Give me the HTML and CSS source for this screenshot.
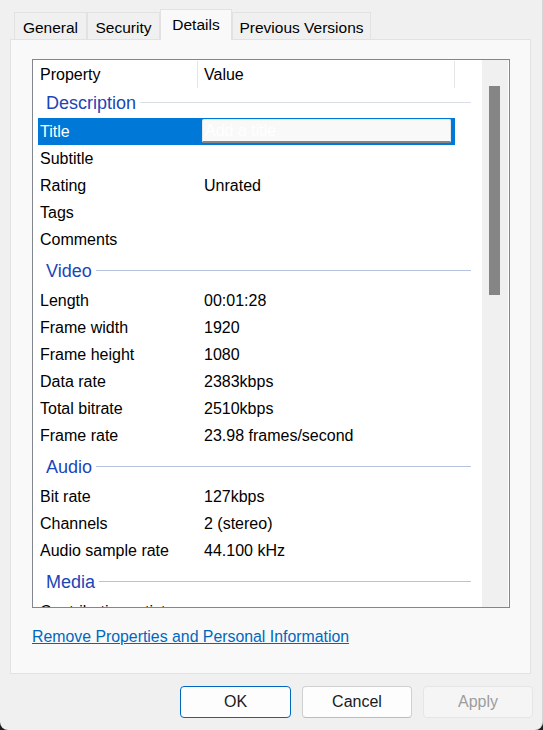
FILE: index.html
```html
<!DOCTYPE html>
<html>
<head>
<meta charset="utf-8">
<link rel="stylesheet" href="styles.css">
</head>
<body>
<div class="window">
  <div class="tabs">
    <div class="tab t-general">General</div>
    <div class="tab t-security">Security</div>
    <div class="tab t-details active">Details</div>
    <div class="tab t-prev">Previous Versions</div>
  </div>
  <div class="panel">
    <div class="list">
      <div class="content">
        <div class="hdr">
          <div class="hcell h1">Property</div>
          <div class="hcell h2">Value</div>
        </div>
        <div class="group first"><span class="gname">Description</span><span class="gline light"></span></div>
        <div class="row selected"><div class="lbl">Title</div><div class="val"><div class="edit">Add a title</div></div></div>
        <div class="row"><div class="lbl">Subtitle</div><div class="val"></div></div>
        <div class="row"><div class="lbl">Rating</div><div class="val">Unrated</div></div>
        <div class="row"><div class="lbl">Tags</div><div class="val"></div></div>
        <div class="row"><div class="lbl">Comments</div><div class="val"></div></div>
        <div class="group"><span class="gname">Video</span><span class="gline"></span></div>
        <div class="row"><div class="lbl">Length</div><div class="val">00:01:28</div></div>
        <div class="row"><div class="lbl">Frame width</div><div class="val">1920</div></div>
        <div class="row"><div class="lbl">Frame height</div><div class="val">1080</div></div>
        <div class="row"><div class="lbl">Data rate</div><div class="val">2383kbps</div></div>
        <div class="row"><div class="lbl">Total bitrate</div><div class="val">2510kbps</div></div>
        <div class="row"><div class="lbl">Frame rate</div><div class="val">23.98 frames/second</div></div>
        <div class="group"><span class="gname">Audio</span><span class="gline"></span></div>
        <div class="row"><div class="lbl">Bit rate</div><div class="val">127kbps</div></div>
        <div class="row"><div class="lbl">Channels</div><div class="val">2 (stereo)</div></div>
        <div class="row"><div class="lbl">Audio sample rate</div><div class="val">44.100 kHz</div></div>
        <div class="group"><span class="gname">Media</span><span class="gline"></span></div>
        <div class="row"><div class="lbl">Contributing artists</div><div class="val"></div></div>
      </div>
      <div class="scrollbar"><div class="thumb"></div></div>
    </div>
    <a class="link" href="#">Remove Properties and Personal Information</a>
  </div>
  <div class="buttons">
    <div class="btn ok">OK</div>
    <div class="btn">Cancel</div>
    <div class="btn disabled">Apply</div>
  </div>
</div>
</body>
</html>
```
FILE: styles.css
```css
html, body {
  margin: 0;
  padding: 0;
  background: #1e1e1e;
}
body {
  width: 543px;
  height: 730px;
  overflow: hidden;
  font-family: "Liberation Sans", Arial, sans-serif;
  color: #000;
}
.window {
  width: 543px;
  height: 730px;
  box-sizing: border-box;
  background: #f0f0f0;
  border-radius: 0 0 8px 8px;
  border-right: 1px solid #d6d6d6;
  overflow: hidden;
}
.tabs {
  display: flex;
  align-items: flex-end;
  padding: 9px 0 0 14px;
  height: 30px;
  position: relative;
  z-index: 1;
}
.tab {
  box-sizing: border-box;
  height: 27px;
  border: 1px solid #e2e2e2;
  border-bottom: none;
  background: #f0f0f0;
  font-size: 15.5px;
  line-height: 29px;
  text-align: center;
  color: #000;
}
.t-general { width: 73px; }
.t-security { width: 73px; }
.t-details { width: 72px; }
.t-prev { width: 139px; }
.tab.active {
  height: 31px;
  margin-bottom: -1px;
  background: #f9f9f9;
  line-height: 29px;
}
.panel {
  box-sizing: border-box;
  margin-left: 10px;
  width: 521px;
  height: 635px;
  background: #f9f9f9;
  border: 1px solid #e2e2e2;
  padding: 19px 20px 0 21px;
}
.list {
  box-sizing: border-box;
  width: 478px;
  height: 549px;
  border: 1px solid #82868e;
  background: #fff;
  display: flex;
  overflow: hidden;
}
.content {
  width: 449px;
  height: 547px;
  overflow: hidden;
  font-size: 16px;
}
.hdr {
  height: 29px;
  display: flex;
  align-items: flex-start;
}
.hcell {
  box-sizing: border-box;
  height: 27px;
  margin-top: 1px;
  line-height: 27px;
  border-right: 1px solid #e5e5e5;
}
.h1 { width: 165px; padding-left: 7px; }
.h2 { width: 257px; padding-left: 6px; }
.group {
  display: flex;
  align-items: center;
  height: 28px;
  padding: 4px 11px 2px 13px;
}
.group.first {
  padding-top: 0;
  padding-bottom: 1px;
}
.gname {
  font-size: 18px;
  color: #1c45b8;
  line-height: 28px;
}
.gline {
  flex: 1;
  height: 1px;
  margin-left: 4px;
  margin-top: -2px;
  background: #b6c3de;
}
.gline.light {
  background: #dadee6;
}
.row {
  display: flex;
  height: 27px;
  margin-left: 5px;
  width: 417px;
  line-height: 27px;
  white-space: nowrap;
}
.lbl {
  box-sizing: border-box;
  width: 164px;
  padding-left: 2px;
}
.val {
  box-sizing: border-box;
  width: 253px;
  padding-left: 2px;
}
.row.selected {
  background: #0078d7;
  color: #fff;
}
.row.selected .val {
  padding-left: 0;
}
.edit {
  box-sizing: border-box;
  width: 249px;
  height: 24px;
  margin-top: 1px;
  background: #f9f9f9;
  border: 1px solid #e6e6e6;
  border-bottom: 2px solid #858585;
  border-radius: 2px;
  color: #ffffff;
  line-height: 22px;
  padding-left: 2px;
}
.scrollbar {
  width: 26px;
  height: 547px;
  background: #f0f0f0;
}
.thumb {
  width: 11px;
  height: 209px;
  margin: 26px 0 0 7px;
  background: #858585;
}
.link {
  display: block;
  margin-top: 20px;
  font-size: 15.85px;
  line-height: 18px;
  color: #0067c0;
  text-decoration: underline;
  width: max-content;
}
.buttons {
  display: flex;
  justify-content: flex-end;
  gap: 11px;
  padding-right: 9px;
  margin-top: 12px;
}
.btn {
  box-sizing: border-box;
  width: 110px;
  height: 32px;
  border: 1px solid #d0d0d0;
  border-bottom-color: #bdbdbd;
  border-radius: 4px;
  background: #fdfdfd;
  font-size: 16px;
  line-height: 30px;
  text-align: center;
  color: #1a1a1a;
}
.btn.ok {
  width: 111px;
  border: 1px solid #0067c0;
}
.btn.disabled {
  background: #f5f5f5;
  border-color: #e5e5e5;
  color: #9d9d9d;
}
```
